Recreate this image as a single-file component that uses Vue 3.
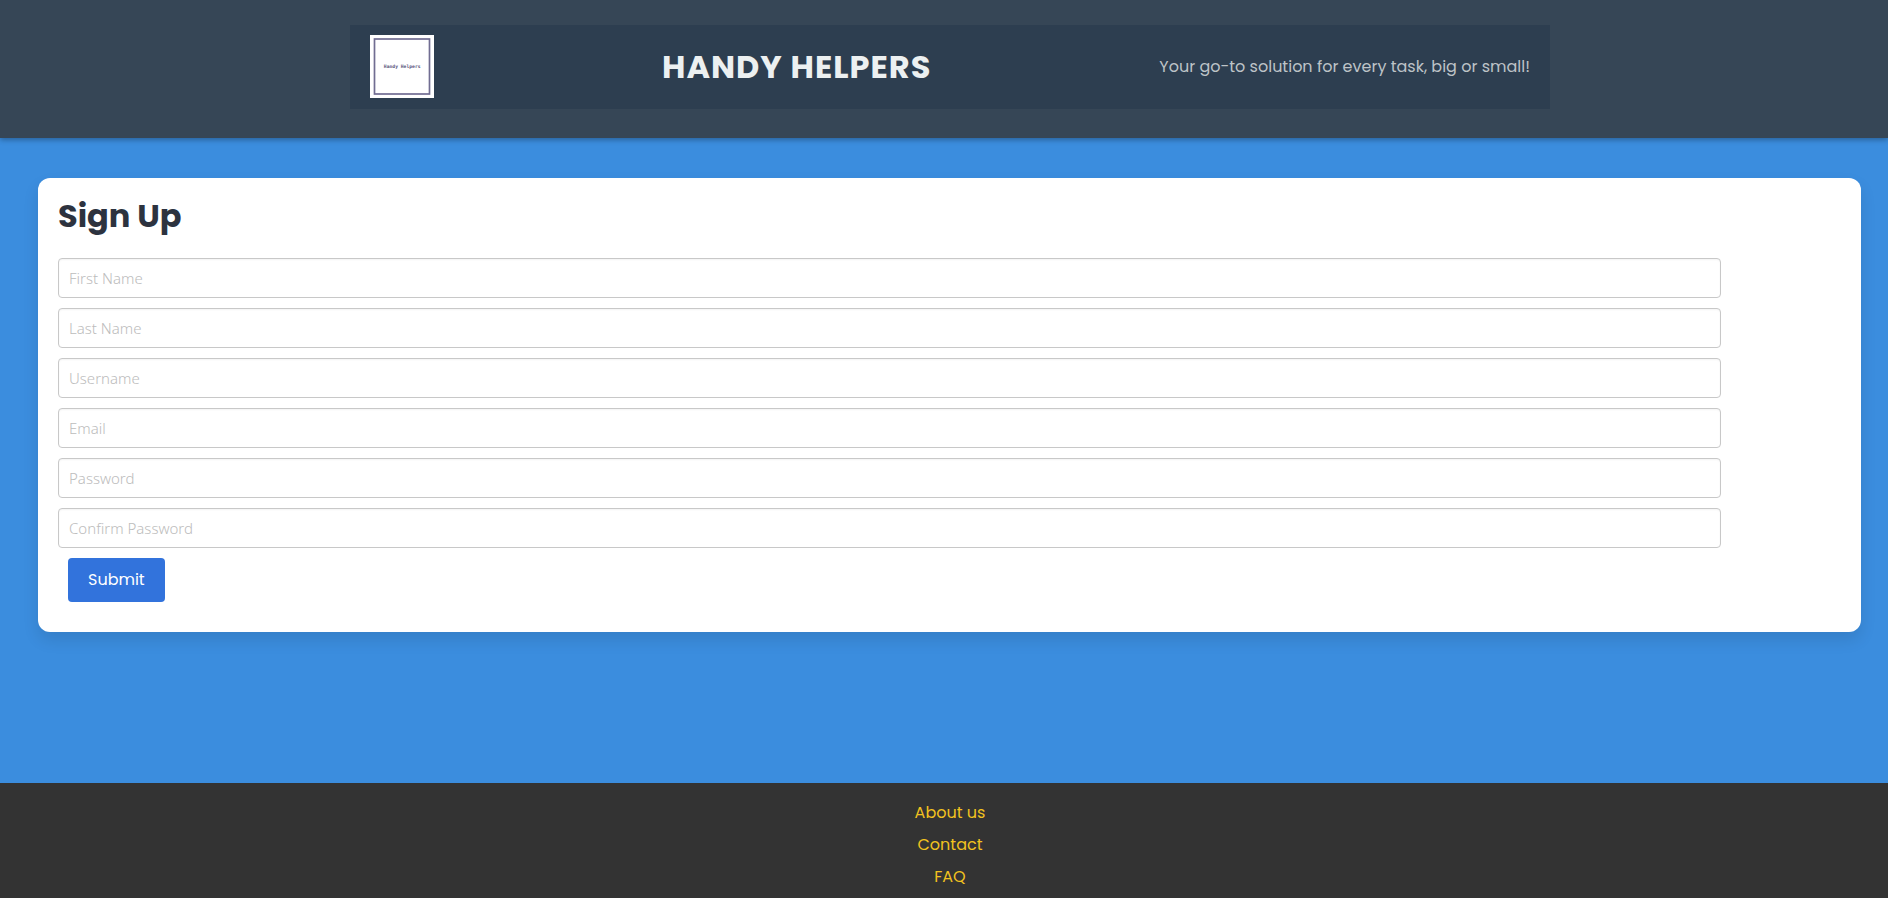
<script setup>
const fields = [
  { id: 'first-name', label: 'First Name', type: 'text' },
  { id: 'last-name', label: 'Last Name', type: 'text' },
  { id: 'username', label: 'Username', type: 'text' },
  { id: 'email', label: 'Email', type: 'email' },
  { id: 'password', label: 'Password', type: 'password' },
  { id: 'confirm-password', label: 'Confirm Password', type: 'password' },
]
const links = ['About us', 'Contact', 'FAQ']
</script>

<template>
  <div class="page">
    <header class="header">
      <div class="navbar">
        <svg class="logo" viewBox="0 0 640 640" role="img" aria-label="Handy Helpers">
          <rect width="640" height="630" fill="#ffffff" />
          <rect x="45" y="40" width="550" height="550" fill="none" stroke="#716d92" stroke-width="17" />
          <text x="322" y="329" text-anchor="middle" class="logo-text">Handy Helpers</text>
        </svg>
        <h1 class="brand">HANDY HELPERS</h1>
        <p class="tagline">Your go-to solution for every task, big or small!</p>
      </div>
    </header>

    <main class="main">
      <section class="card">
        <h2 class="title">Sign Up</h2>
        <form class="form" @submit.prevent>
          <input
            v-for="field in fields"
            :id="field.id"
            :key="field.id"
            class="input"
            :type="field.type"
            :placeholder="field.label"
            :aria-label="field.label"
          />
          <button class="submit" type="submit">Submit</button>
        </form>
      </section>
    </main>

    <footer class="footer">
      <a v-for="link in links" :key="link" class="link" href="#">{{ link }}</a>
    </footer>
  </div>
</template>

<style>
body {
  margin: 0;
  background: #3b8dde;
}
</style>

<style scoped>
.page {
  display: flex;
  flex-direction: column;
  min-height: 100vh;
  font-family: Poppins, Inter, "Open Sans", sans-serif;
  font-size: 16px;
  line-height: 24px;
  background: #3b8dde;
}

.header {
  position: relative;
  padding: 25px 0 29px 12px;
  background: #364656;
  box-shadow: 0 2px 5px rgba(0, 0, 0, 0.3);
}

.navbar {
  display: flex;
  align-items: center;
  justify-content: space-between;
  box-sizing: border-box;
  max-width: 1200px;
  margin: 0 auto;
  padding: 10px 20px;
  background: #2d3e50;
}

.logo {
  width: 64px;
  height: 64px;
}

.logo-text {
  font-family: "DejaVu Sans Mono", "Liberation Mono", monospace;
  font-size: 47px;
  font-weight: 700;
  fill: #5c5880;
}

.brand {
  margin: 0;
  font-size: 32px;
  line-height: 48px;
  font-weight: 700;
  letter-spacing: 1px;
  color: #ecf0f1;
}

.tagline {
  margin: 0;
  color: #bdc3c7;
}

.main {
  flex: 1;
  padding: 40px 27px 40px 38px;
}

.card {
  padding: 20px 20px 30px;
  border-radius: 12px;
  background: #ffffff;
  box-shadow: 0 8px 16px rgba(0, 0, 0, 0.1);
}

.title {
  margin: 0 0 24px;
  font-size: 32px;
  line-height: 36px;
  font-weight: 700;
  color: #2d333f;
}

.form {
  display: flex;
  flex-direction: column;
  align-items: flex-start;
  gap: 10px;
}

.input {
  box-sizing: border-box;
  width: calc(100% - 120px);
  height: 40px;
  padding: 0 10px;
  border: 1px solid #c8c8c8;
  border-radius: 4px;
  outline: none;
  background: #ffffff;
  box-shadow: inset 0 1px 2px rgba(0, 0, 0, 0.05);
  color: #363636;
  font-family: "Segoe UI", "Noto Sans", "Open Sans", sans-serif;
  font-size: 15px;
}

.input::placeholder {
  color: #bcbcbc;
  font-weight: 300;
  opacity: 1;
}

.submit {
  margin-left: 10px;
  padding: 10px 20px;
  border: 0;
  border-radius: 4px;
  background: #3273dc;
  color: #ffffff;
  font-family: inherit;
  font-size: 16px;
  line-height: 24px;
  font-weight: 400;
  cursor: pointer;
}

.footer {
  display: flex;
  flex-direction: column;
  align-items: center;
  gap: 8px;
  padding: 18px 0 9px 12px;
  background: #333333;
}

.link {
  color: #f1c21f;
  text-decoration: none;
}
</style>
